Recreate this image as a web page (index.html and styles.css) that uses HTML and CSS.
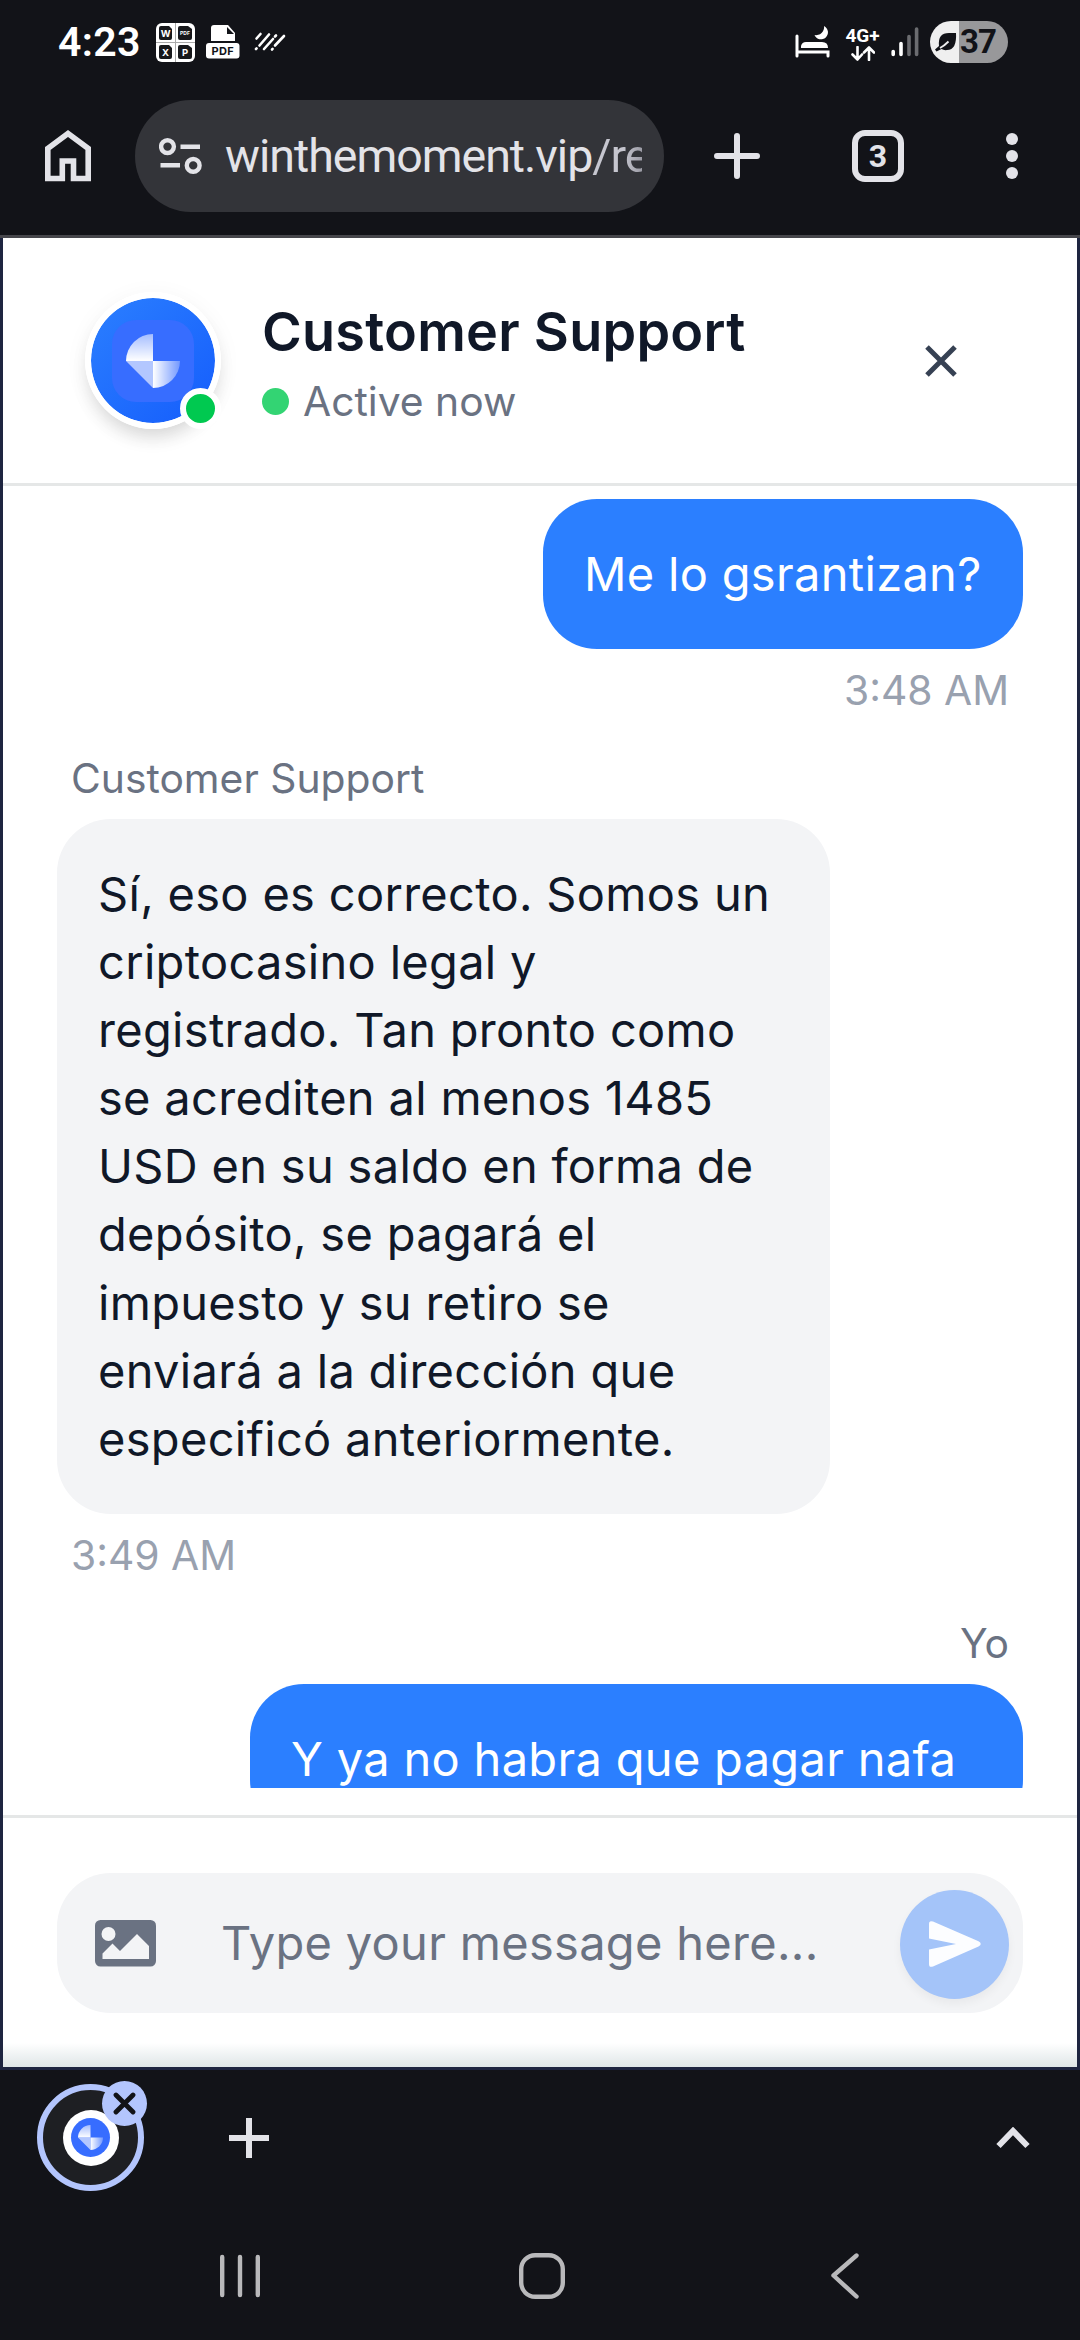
FILE: index.html
```html
<!DOCTYPE html>
<html lang="es">
<head>
<meta charset="utf-8">
<title>Customer Support</title>
<link rel="stylesheet" href="styles.css">
</head>
<body>
<svg width="0" height="0" class="defs" aria-hidden="true">
  <defs>
    <linearGradient id="fadeUp" x1="0" y1="0" x2="0" y2="1"><stop offset="0" stop-color="#fff" stop-opacity=".55"/><stop offset="1" stop-color="#fff"/></linearGradient>
    <linearGradient id="fadeRight" x1="0" y1="0" x2="1" y2="0"><stop offset="0" stop-color="#fff"/><stop offset="1" stop-color="#fff" stop-opacity=".3"/></linearGradient>
    <symbol id="logo" viewBox="0 0 54 54">
      <path d="M27 0V27H0A27 27 0 0 1 27 0Z" fill="url(#fadeUp)"/>
      <path d="M0 27H27V54Z" fill="#fff" fill-opacity=".62"/>
      <path d="M27 27H54A27 27 0 0 1 27 54Z" fill="url(#fadeRight)"/>
    </symbol>
  </defs>
</svg>
<div class="phone">
  <header class="status">
    <span class="clock">4:23</span>
    <svg class="ic-office" width="39" height="39" viewBox="0 0 39 39">
      <rect width="39" height="39" rx="6" fill="#fff"/>
      <path d="M19.5 0V39M0 19.5H39" stroke="#aaa" stroke-width="1"/>
      <g fill="#17181b"><path d="M5 3h8l3 3v9q0 2-2 2H5q-2 0-2-2V5q0-2 2-2z"/><path d="M24 3h8l4 3v9q0 2-2 2H24q-2 0-2-2V5q0-2 2-2z"/><path d="M5 22h8l3 3v9q0 2-2 2H5q-2 0-2-2V24q0-2 2-2z"/><path d="M24 22h8l4 3v9q0 2-2 2H24q-2 0-2-2V24q0-2 2-2z"/></g>
      <g class="office-letters" fill="#fff" text-anchor="middle"><text x="9.6" y="13.500">W</text><text x="29" y="12.2" class="tiny">PDF</text><text x="9.6" y="32.6">X</text><text x="29" y="32.6">P</text></g>
    </svg>
    <svg class="ic-pdf" width="34" height="34" viewBox="0 0 34 34">
      <path d="M5 3q0-3 3-3H22l7 8v8H5z" fill="#fff"/><path d="M21 2v7h7z" fill="#121318"/>
      <rect y="18" width="33.5" height="15.5" rx="3" fill="#fff"/>
      <text x="16.8" y="29.8" text-anchor="middle" class="pdf-text">PDF</text>
    </svg>
    <svg class="ic-dash" width="32" height="20" viewBox="0 0 32 20" stroke="#fff" stroke-width="2.600" stroke-linecap="round" fill="none">
      <path d="M2.500 6.500L6.500 2M2 17L2.600 16.400M5.500 13.500L15 2.500M10 17L19 7M21 4.500L22 3.500M18 17.500L18.600 16.900M21 13.500L30 4"/>
    </svg>
    <span class="grow"></span>
    <svg class="ic-bed" width="36" height="32" viewBox="0 0 36 32">
      <path d="M2 10V30M2 26H33V30" fill="none" stroke="#fff" stroke-width="3" stroke-linecap="round"/>
      <path d="M6 22v-2q1-4 5-4H27q6 0 6 6z" fill="#fff"/>
      <path d="M29 0A7 7 0 1 1 19.500 9A8 8 0 0 0 29 0Z" fill="#fff"/>
    </svg>
    <div class="net"><span>4G+</span>
      <svg width="24" height="15" viewBox="0 0 24 15" fill="none" stroke="#fff" stroke-width="2.600" stroke-linecap="round" stroke-linejoin="round"><path d="M6.500 1V13M1.500 8.500L6.500 13.500L11 8.500M18 14V2M13 6.500L18 1.500L23 6.500"/></svg>
    </div>
    <svg class="ic-signal" width="29" height="30" viewBox="0 0 29 30" stroke-width="3.600" stroke-linecap="round"><path d="M2.200 24.500V27.500M10 16.500V27.500" stroke="#fff"/><path d="M18 9.500V27.500M25.600 2V27.500" stroke="#6b6c70"/></svg>
    <div class="battery">
      <svg width="22" height="20" viewBox="0 0 22 20"><path d="M4 14Q2.500 1 14 1H21Q22 18 12 18Q9 18.500 6.500 17L1.500 19.500L0 17.500Z" fill="#121318"/><path d="M5 16Q9 14 13.500 9.500" stroke="#efefef" stroke-width="1.800" fill="none"/></svg>
      <span>37</span>
    </div>
  </header>

  <nav class="toolbar">
    <svg class="ic-home" width="46" height="52" viewBox="0 0 46 52"><path d="M2.800 18.500L23 3.600L43.200 18.500V48.500H28.500V31H17.300V48.500H2.800Z" fill="none" stroke="#e3e3e8" stroke-width="5.600"/></svg>
    <div class="url">
      <svg width="43" height="37" viewBox="0 0 43 37" fill="none" stroke="#e3e3e8" stroke-width="4.400"><circle cx="8.500" cy="8.600" r="6.400"/><path d="M21.500 8.800H41M1.500 27.200H21"/><circle cx="34.200" cy="27.400" r="6.400"/></svg>
      <div class="url-text">winthemoment.vip<span>/re</span></div>
    </div>
    <svg class="ic-plus" width="46" height="46" viewBox="0 0 46 46" stroke="#e3e3e8" stroke-width="6" stroke-linecap="round"><path d="M23 3V43M3 23H43"/></svg>
    <div class="tabs">3</div>
    <svg class="ic-more" width="12" height="46" viewBox="0 0 12 46" fill="#e3e3e8"><circle cx="6" cy="6" r="6"/><circle cx="6" cy="23" r="6"/><circle cx="6" cy="40" r="6"/></svg>
  </nav>

  <main class="page">
    <section class="chat-head">
      <div class="avatar">
        <div class="avatar-tile"><svg width="54" height="54"><use href="#logo"/></svg></div>
        <i class="online"></i>
      </div>
      <div class="who">
        <h1>Customer Support</h1>
        <p><i></i>Active now</p>
      </div>
      <svg class="ic-close" width="32" height="32" viewBox="0 0 32 32" stroke="#364153" stroke-width="5"><path d="M2 2L30 30M30 2L2 30"/></svg>
    </section>

    <section class="messages">
      <article class="msg me">
        <div class="bubble short">Me lo gsrantizan?</div>
        <time>3:48 AM</time>
      </article>
      <article class="msg">
        <div class="name">Customer Support</div>
        <div class="bubble wide">Sí, eso es correcto. Somos un<br>criptocasino legal y<br>registrado. Tan pronto como<br>se acrediten al menos 1485<br>USD en su saldo en forma de<br>depósito, se pagará el<br>impuesto y su retiro se<br>enviará a la dirección que<br>especificó anteriormente.</div>
        <time>3:49 AM</time>
      </article>
      <article class="msg me">
        <div class="name">Yo</div>
        <div class="bubble wide">Y ya no habra que pagar nafa</div>
      </article>
    </section>

    <section class="composer">
      <div class="field">
        <svg class="ic-image" width="61" height="47" viewBox="0 0 61 47"><rect width="61" height="46.500" rx="5.500" fill="#6a7282"/><circle cx="13.500" cy="14" r="7" fill="#f3f4f6"/><path d="M7.500 33.500L17.500 23.500L25 31L42 14L54 26V39H7.500Z" fill="#f3f4f6"/></svg>
        <span class="placeholder">Type your message here...</span>
        <div class="send"><svg width="52" height="46" viewBox="0 0 52 46"><path d="M0 3Q0-1 4 .6L49.500 20.300Q54 23 49.500 25.500L4 45.400Q0 47 0 43V28.500L27 23L0 17.500Z" fill="#fcfdff"/></svg></div>
      </div>
    </section>
  </main>

  <footer class="tabstrip">
    <div class="tab">
      <div class="fav"><div class="fav-in"><svg width="25" height="25"><use href="#logo"/></svg></div></div>
      <div class="tab-x"><svg width="23" height="23" viewBox="0 0 23 23" stroke="#121318" stroke-width="4.800" stroke-linecap="round"><path d="M3 3L20 20M20 3L3 20"/></svg></div>
    </div>
    <svg class="ic-add" width="40" height="40" viewBox="0 0 40 40" stroke="#e3e3e8" stroke-width="6"><path d="M20 0V40M0 20H40"/></svg>
    <span class="grow"></span>
    <svg class="ic-up" width="34" height="22" viewBox="0 0 34 22"><path d="M2.500 19L17 4L31.500 19" fill="none" stroke="#e3e3e8" stroke-width="6"/></svg>
  </footer>

  <nav class="sysnav">
    <svg width="40" height="46" viewBox="0 0 40 46" stroke="#b9b9bb" stroke-width="4.400" stroke-linecap="round"><path d="M2.200 4V42M20 4V42M37.800 4V42"/></svg>
    <svg class="ic-square" width="46" height="46" viewBox="0 0 46 46"><rect x="2.200" y="2.200" width="41.600" height="41.600" rx="14" fill="none" stroke="#b9b9bb" stroke-width="4.400"/></svg>
    <svg width="28" height="46" viewBox="0 0 28 46"><path d="M25.500 2.500L2.500 22.500L25.500 43.500" fill="none" stroke="#b9b9bb" stroke-width="4.400" stroke-linecap="round" stroke-linejoin="round"/></svg>
  </nav>
</div>
</body>
</html>
```

FILE: styles.css
```css
* { box-sizing: border-box; }
body { margin: 0; background: #121318; font-family: Inter, "Liberation Sans", sans-serif; }
h1, p { margin: 0; }
svg { display: block; flex: none; }
.defs { position: absolute; }
.grow { flex: 1; }
.phone { width: 1080px; height: 2340px; display: flex; flex-direction: column; overflow: hidden; background: #121318; }

/* status bar */
.status { height: 84px; flex: none; display: flex; align-items: center; padding: 0 72px 0 58px; color: #fff; font-family: Roboto, sans-serif; }
.clock { width: 98px; font-size: 41px; font-weight: 600; line-height: 48px; letter-spacing: .3px; }
.office-letters { font: 700 9.500px Inter, sans-serif; }
.office-letters .tiny { font-size: 5px; }
.pdf-text { font: 700 11px Inter, sans-serif; letter-spacing: .4px; fill: #121318; }
.ic-pdf { margin-left: 11px; }
.ic-dash { margin-left: 14px; }
.net { width: 35px; height: 34px; margin: 3px 11px 0 14px; display: flex; flex-direction: column; align-items: center; justify-content: space-between; }
.net span { font-size: 19px; font-weight: 700; line-height: 17px; white-space: nowrap; }
.battery { width: 78px; height: 42px; margin-left: 10px; padding-left: 5px; border-radius: 21px; display: flex; align-items: center; gap: 3px; background: linear-gradient(90deg, #efefef 29px, #98989a 29px); }
.battery span { color: #121318; font-size: 33px; font-weight: 700; line-height: 42px; letter-spacing: -1px; }

/* browser toolbar */
.toolbar { height: 154px; flex: none; display: flex; align-items: center; padding: 0 62px 7px 45px; border-bottom: 3px solid #46464b; }
.ic-home { margin-right: 44px; }
.url { width: 529px; height: 112px; padding: 0 22px 0 24px; border-radius: 56px; background: #333439; display: flex; align-items: center; gap: 23px; }
.url-text { width: 417px; overflow: hidden; white-space: nowrap; color: #e3e3e8; font-family: Roboto, sans-serif; font-size: 46.500px; line-height: 66px; letter-spacing: -1px; }
.url-text span { background: linear-gradient(90deg, #c6c6cf, #c6c6cf 55%, #8e8e98); -webkit-background-clip: text; background-clip: text; color: transparent; }
.ic-plus { margin-left: 50px; }
.tabs { width: 52px; height: 52px; margin: 0 102px 0 92px; border: 6px solid #e3e3e8; border-radius: 13px; color: #e3e3e8; font: 700 32px/40px Roboto, sans-serif; text-align: center; }

/* chat panel */
.page { height: 1832px; flex: none; display: flex; flex-direction: column; border: solid #1e2540; border-width: 0 3px 3px; background: linear-gradient(#fff0 0, #fff0 1805px, #dfe6e7 1829px), #fff; }
.chat-head { height: 248px; flex: none; display: flex; align-items: flex-start; padding: 54px 120px 0 82px; border-bottom: 3px solid #e5e7e7; }
.avatar { position: relative; width: 136px; height: 137px; border: 6px solid #fff; border-radius: 50%; background: linear-gradient(135deg, #2b7fff, #155dfc) padding-box; box-shadow: 0 12px 18px -4px #0002, 0 4px 24px #0000000c; display: flex; align-items: center; justify-content: center; }
.avatar-tile { width: 82px; height: 82px; border-radius: 24px; background: #376dff; display: flex; align-items: center; justify-content: center; }
.online { position: absolute; right: -6px; bottom: -6px; width: 41px; height: 41px; border: 6px solid #fff; border-radius: 50%; background: #00c950; }
.who { flex: 1; padding-left: 41px; }
.who h1 { padding-top: 6px; color: #101828; font-size: 54px; font-weight: 600; line-height: 68px; letter-spacing: .25px; white-space: nowrap; }
.who p { display: flex; align-items: center; gap: 14px; margin-top: 5px; color: #6a7282; font-size: 40.800px; line-height: 60px; }
.who p i { width: 27px; height: 27px; border-radius: 50%; background: #33d473; }
.ic-close { margin-top: 53px; }

.messages { height: 1302px; flex: none; overflow: hidden; padding: 13px 54px 0; display: flex; flex-direction: column; gap: 27.500px; }
.msg { flex: none; display: flex; flex-direction: column; align-items: flex-start; gap: 11px; }
.msg.me { align-items: flex-end; }
.bubble { padding: 41px; border-radius: 54px; background: #f3f4f6; color: #101828; font-size: 47px; line-height: 68.150px; letter-spacing: .31px; white-space: nowrap; }
.me .bubble { background: #2b7fff; color: #fff; }
.bubble.short { width: 480px; }
.bubble.wide { width: 773px; }
.msg time, .name { padding: 0 14px; font-size: 40.800px; line-height: 60px; color: #99a1af; }
.name { color: #6a7282; }

.composer { flex: 1; margin-top: 27px; padding: 55px 54px 0; border-top: 3px solid #e5e7e7; }
.field { height: 140px; padding: 0 14px 0 38px; border-radius: 54px; background: #f3f4f6; display: flex; align-items: center; }
.placeholder { flex: 1; padding-left: 65px; color: #6a7282; font-size: 47px; line-height: 68px; letter-spacing: .31px; }
.send { width: 109px; height: 109px; margin-top: 2px; padding-left: 0; border-radius: 50%; background: #a4c4f9; box-shadow: 0 5px 10px #0000000c; display: flex; align-items: center; justify-content: center; }

/* tab strip */
.tabstrip { height: 135px; flex: none; display: flex; align-items: center; padding: 0 50px 0 37px; }
.tab { position: relative; width: 107px; height: 107px; border: 6px solid #b3c5fd; border-radius: 50%; background: #1e1f23; display: flex; align-items: center; justify-content: center; }
.fav { width: 56px; height: 56px; border-radius: 50%; background: #fff; display: flex; align-items: center; justify-content: center; }
.fav-in { width: 39px; height: 39px; border-radius: 50%; background: #376dff; display: flex; align-items: center; justify-content: center; }
.tab-x { position: absolute; left: 59px; top: -9px; width: 45px; height: 45px; border-radius: 50%; background: #b3c5fd; display: flex; align-items: center; justify-content: center; }
.ic-add { margin-left: 85px; }

/* system navigation */
.sysnav { flex: 1; display: flex; align-items: flex-start; padding: 48px 0 0 220px; }
.ic-square { margin: 0 266px 0 259px; }
```
